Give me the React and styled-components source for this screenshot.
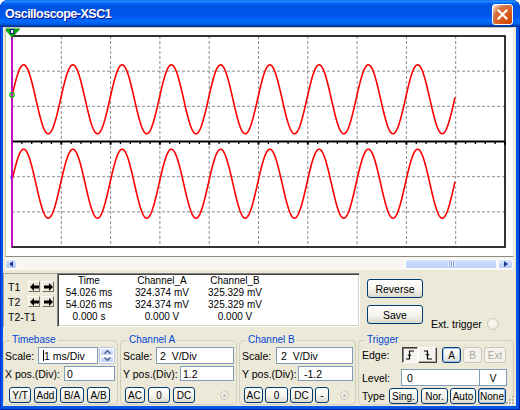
import React from "react";
import styled, { createGlobalStyle, css } from "styled-components";

const FONT = `"Liberation Sans", Arial, sans-serif`;

const GlobalStyle = createGlobalStyle`
  html, body { margin: 0; padding: 0; background: #ffffff; }
  body { font-family: ${FONT}; font-size: 10px; color: #000; }
  * { box-sizing: border-box; }
`;

const Window = styled.div`
  width: 520px;
  height: 410px;
  display: flex;
  flex-direction: column;
  background: #0055e8;
  border-radius: 8px 8px 0 0;
  box-shadow: inset 1px 0 0 #0831d9, inset -1px 0 0 #001ea0, inset 0 -1px 0 #001ea0;
  overflow: hidden;
`;

const TitleBar = styled.div`
  height: 27px;
  flex: none;
  display: flex;
  align-items: center;
  justify-content: space-between;
  padding: 0 7px 0 5px;
  border-radius: 8px 8px 0 0;
  background: linear-gradient(
    180deg,
    #0058ee 0%,
    #3593ff 4%,
    #288eff 6%,
    #127dff 8%,
    #036ffc 10%,
    #0262ee 14%,
    #0057e5 20%,
    #0054e3 24%,
    #0055eb 56%,
    #005bf5 66%,
    #026afe 76%,
    #0062ef 86%,
    #0052d6 92%,
    #0040ab 94%,
    #003092 100%
  );
`;

const TitleText = styled.span`
  color: #fff;
  font: bold 12.5px ${FONT};
  letter-spacing: -0.5px;
  text-shadow: 1px 1px 0 #0f1089;
  padding-top: 1px;
`;

const CloseButton = styled.div`
  width: 21px;
  height: 21px;
  margin-top: 1px;
  border: 1px solid #fff;
  border-radius: 3px;
  background: radial-gradient(
    circle at 90% 90%,
    #cc4600 0%,
    #dc6527 55%,
    #cd7546 70%,
    #ffccb2 90%,
    #ffffff 100%
  );
  display: flex;
  align-items: center;
  justify-content: center;
`;

const Body = styled.div`
  position: relative;
  flex: 1;
  margin: 0 4px 4px 3px;
  background: #ece9d8;
  display: flex;
  flex-direction: column;
`;

const ScopePanel = styled.div`
  flex: none;
  height: 230px;
  margin: 0 2px;
  background: #fff;
  border: 1px solid;
  border-color: #c9c6b8 #f1efe2 #8e8b7e #c9c6b8;
  display: flex;
`;

const HScroll = styled.div`
  flex: none;
  height: 13px;
  margin: 0 2px;
  padding: 0 1px 0 0;
  display: flex;
  align-items: center;
  background: #f7f6f1;
`;

const ScrollBtn = styled.div`
  width: ${(p) => p.$w}px;
  height: 10px;
  border: 1px solid #fff;
  border-radius: 2px;
  background: linear-gradient(#dbe6fe, #b7cbf7);
  display: flex;
  align-items: center;
  justify-content: center;
`;

const Thumb = styled.div`
  margin-left: auto;
  margin-right: 1px;
  width: 92px;
  height: 10px;
  border: 1px solid #fff;
  border-radius: 2px;
  background: linear-gradient(#d3e0fd, #bccff8);
  display: flex;
  align-items: center;
  justify-content: center;
`;

const Grip = styled.span`
  width: 7px;
  height: 6px;
  background: repeating-linear-gradient(90deg, #eef3ff 0 1px, #8da6dc 1px 2px);
`;

const CursorRow = styled.div`
  flex: none;
  height: 60px;
  padding-top: 3px;
  display: flex;
  align-items: flex-start;
`;

const TGroup = styled.div`
  width: 54px;
  height: 54px;
  border-top: 1px solid #aca899;
  border-left: 1px solid #aca899;
  padding: 7px 0 0 4px;
  display: grid;
  grid-template-columns: 18px 12px 12px;
  grid-template-rows: 11px 11px 12px;
  column-gap: 2px;
  row-gap: 4px;
  align-items: center;
`;

const TLabel = styled.span`
  font-size: 10.5px;
  line-height: 12px;
  ${(p) => p.$span && css`grid-column: 1 / -1;`}
`;

const ArrowBtn = styled.span`
  width: 12px;
  height: 11px;
  background: #ece9d8;
  border: 1px solid;
  border-color: #fff #716f64 #716f64 #fff;
  display: flex;
  align-items: center;
  justify-content: center;
`;

const DataBox = styled.div`
  width: 303px;
  height: 54px;
  background: #fff;
  border: 1px solid;
  border-color: #808080 #fff #fff #808080;
  box-shadow: inset 1px 1px 0 #404040, inset -1px -1px 0 #d4d0c8;
  padding-top: 1px;
  display: grid;
  grid-template-columns: 62px 84px 62px;
  grid-auto-rows: 12px;
  justify-items: center;
  line-height: 12px;
  font-size: 10px;
`;

const Cell = styled.span`
  white-space: nowrap;
`;

const ButtonCol = styled.div`
  margin-left: 7px;
  padding-top: 6px;
  display: flex;
  flex-direction: column;
  gap: 7px;
`;

const ExtTrigger = styled.div`
  align-self: flex-end;
  margin-left: 8px;
  display: flex;
  align-items: center;
  gap: 5px;
  font-size: 10.5px;
`;

const Radio = styled.span`
  width: ${(p) => p.$size}px;
  height: ${(p) => p.$size}px;
  border-radius: 50%;
  border: 1px solid #cac8bb;
  background: radial-gradient(circle at 40% 40%, #fbfaf6, #e6e3d6);
  display: flex;
  align-items: center;
  justify-content: center;
  flex: none;
  &::after {
    content: "";
    display: ${(p) => (p.$dot ? "block" : "none")};
    width: 3px;
    height: 3px;
    border-radius: 50%;
    background: #b8b5a6;
  }
`;

const ControlsRow = styled.div`
  flex: 1;
  display: grid;
  grid-template-columns: 115px 117px 117px 156px;
  column-gap: 2px;
  padding-bottom: 1px;
`;

const Group = styled.fieldset`
  margin: 4px 0 0 0;
  padding: 0 2px 0 1px;
  min-width: 0;
  border: 1px solid #d0d0bf;
  border-radius: 4px;
  display: flex;
  flex-direction: column;
`;

const Legend = styled.legend`
  margin-left: 5px;
  padding: 0 2px;
  color: #0046d5;
  font-size: 10px;
  line-height: 12px;
`;

const Row = styled.div`
  display: flex;
  align-items: center;
  height: ${(p) => p.$h}px;
  margin-top: ${(p) => p.$mt}px;
  padding-left: ${(p) => p.$pl || 0}px;
  gap: ${(p) => p.$gap || 0}px;
`;

const Tail = styled.div`
  display: flex;
  align-items: center;
  gap: ${(p) => p.$gap || 0}px;
  margin-left: ${(p) => (p.$auto ? "auto" : `${p.$ml || 0}px`)};
  margin-right: ${(p) => p.$mr || 0}px;
`;

const Label = styled.span`
  font-size: 10.5px;
  white-space: nowrap;
  ${(p) =>
    p.$w &&
    css`
      width: ${p.$w}px;
      flex: none;
    `}
`;

const Field = styled.div`
  width: ${(p) => p.$w}px;
  height: ${(p) => p.$h}px;
  margin-left: ${(p) => (p.$push ? "auto" : "0")};
  flex: none;
  background: #fff;
  border: 1px solid #7f9db9;
  ${(p) => p.$noLeft && css`border-left: none;`}
  padding-left: ${(p) => p.$pl ?? 3}px;
  display: flex;
  align-items: center;
  justify-content: ${(p) => (p.$center ? "center" : "flex-start")};
  font-size: 10.5px;
  white-space: pre;
`;

const Caret = styled.span`
  width: 1px;
  height: 11px;
  background: #000;
`;

const Spin = styled.div`
  width: 16px;
  height: 17px;
  margin-left: 1px;
  flex: none;
  display: flex;
  flex-direction: column;
  border: 1px solid #b5c6ea;
  border-radius: 2px;
  overflow: hidden;
`;

const SpinHalf = styled.div`
  flex: 1;
  background: linear-gradient(#dfe8fd, #bccef7);
  border: 1px solid #fff;
  display: flex;
  align-items: center;
  justify-content: center;
`;

const Btn = styled.button`
  width: ${(p) => p.$w}px;
  height: ${(p) => p.$h || 16}px;
  flex: none;
  padding: 0;
  margin: 0 0 0 ${(p) => p.$ml || 0}px;
  font: 10px ${FONT};
  color: #000;
  border: 1px solid #003c74;
  border-radius: 3px;
  background: linear-gradient(#ffffff 0%, #f4f3ee 55%, #dcd8ca 100%);
  display: inline-flex;
  align-items: center;
  justify-content: center;
  ${(p) =>
    p.$active &&
    css`
      box-shadow: inset 0 0 0 1px #a6c0ee;
    `}
  &:disabled {
    border-color: #c9c7ba;
    color: #aca899;
    background: #f4f3ee;
  }
`;

const BigBtn = styled(Btn)`
  font-size: 10.5px;
`;

const EdgeBtn = styled.span`
  width: ${(p) => p.$w}px;
  height: 16px;
  flex: none;
  display: flex;
  align-items: center;
  justify-content: center;
  border: 1px solid;
  ${(p) =>
    p.$pressed
      ? css`
          border-color: #404040 #fff #fff #404040;
          box-shadow: inset 1px 1px 0 #808080;
          background: #f6f5f0;
        `
      : css`
          border-color: #fff #404040 #404040 #fff;
          box-shadow: inset -1px -1px 0 #aca899;
          background: #f4f3ee;
        `}
`;

const SizeGrip = styled.svg`
  position: absolute;
  right: 1px;
  bottom: 1px;
`;

function LeftArrow() {
  return (
    <svg width="9" height="8" viewBox="0 0 9 8">
      <path d="M0 4 L4 0 V2.5 H9 V5.5 H4 V8 Z" fill="#000" />
    </svg>
  );
}
function RightArrow() {
  return (
    <svg width="9" height="8" viewBox="0 0 9 8">
      <path d="M9 4 L5 0 V2.5 H0 V5.5 H5 V8 Z" fill="#000" />
    </svg>
  );
}

function Chevron({ up }) {
  return (
    <svg width="7" height="4" viewBox="0 0 7 4">
      <polyline
        points={up ? "0.5,3.5 3.5,0.8 6.5,3.5" : "0.5,0.5 3.5,3.2 6.5,0.5"}
        fill="none"
        stroke="#4d6185"
        strokeWidth="1.4"
      />
    </svg>
  );
}

function EdgeIcon({ rising }) {
  return (
    <svg width="10" height="10" viewBox="0 0 10 10">
      <path
        d={rising ? "M1 9 H4.5 V1 H9" : "M1 1 H4.5 V9 H9"}
        fill="none"
        stroke="#000"
        strokeWidth="1.2"
      />
      <path
        d={rising ? "M2.8 6 L4.5 4.2 L6.2 6" : "M2.8 4 L4.5 5.8 L6.2 4"}
        fill="none"
        stroke="#000"
        strokeWidth="1"
      />
    </svg>
  );
}

function Screen() {
  const X0 = 12;
  const X1 = 505;
  const Y0 = 36;
  const Y1 = 247;
  const dx = (X1 - X0) / 10;
  const dy = (Y1 - Y0) / 6;
  const axis = Y0 + 3 * dy;
  const vlines = [1, 2, 3, 4, 5, 6, 7, 8, 9].map((i) => X0 + i * dx);
  const hlines = [1, 2, 4, 5].map((i) => Y0 + i * dy);
  const ticks = [];
  for (let i = 0; i <= 50; i++) ticks.push(X0 + (i * dx) / 5);
  const wave = (c) => {
    let d = "";
    for (let x = 12.5; x <= 455; x += 0.5) {
      const y = c - 34.5 * Math.sin((2 * Math.PI * (x - 11.3)) / 49.25);
      d += (d ? "L" : "M") + x.toFixed(1) + " " + y.toFixed(2);
    }
    return d;
  };
  const cA = axis - 1.2 * dy;
  const cB = axis + 1.2 * dy;
  return (
    <svg width="507" height="228" viewBox="6 28 507 228">
      {vlines.map((x) => (
        <line key={"v" + x} x1={x} y1={Y0} x2={x} y2={Y1} stroke="#8c8c8c" strokeWidth="1" strokeDasharray="3 2" />
      ))}
      {hlines.map((y) => (
        <line key={"h" + y} x1={X0} y1={y} x2={X1} y2={y} stroke="#8c8c8c" strokeWidth="1" strokeDasharray="3 2" />
      ))}
      <rect x={X0} y={Y0} width={X1 - X0} height={Y1 - Y0} fill="none" stroke="#000" strokeWidth="1.6" />
      <line x1={X0} y1={axis} x2={X1} y2={axis} stroke="#000" strokeWidth="1.8" />
      {ticks.map((x, i) => (
        <line
          key={"t" + i}
          x1={x}
          y1={axis}
          x2={x}
          y2={axis + (i % 5 === 0 ? 3.2 : 2.6)}
          stroke="#000"
          strokeWidth={i % 5 === 0 ? 2 : 1.3}
        />
      ))}
      <path d={wave(cA)} fill="none" stroke="#ff0000" strokeWidth="1.6" strokeLinejoin="round" />
      <path d={wave(cB)} fill="none" stroke="#ff0000" strokeWidth="1.6" strokeLinejoin="round" />
      <line x1="12" y1="30" x2="12" y2={Y1} stroke="#ff00ff" strokeWidth="1.4" />
      <circle cx="12" cy={cA - 4.5} r="2.3" fill="none" stroke="#00c000" strokeWidth="1.2" />
      <line x1="11.2" y1={cB - 8} x2="11.2" y2={cB - 5} stroke="#0000ff" strokeWidth="1" />
      <polygon points="4.5,28.8 20,28.8 12.2,37.5" fill="#00b000" stroke="#007000" strokeWidth="0.5" />
      <rect x="10.6" y="29.4" width="3.2" height="4" fill="#fff" stroke="#000080" strokeWidth="0.9" />
    </svg>
  );
}

export default function App() {
  return (
    <>
      <GlobalStyle />
      <Window>
        <TitleBar>
          <TitleText>Oscilloscope-XSC1</TitleText>
          <CloseButton>
            <svg width="11" height="11" viewBox="0 0 11 11">
              <path d="M1.5 1.5 L9.5 9.5 M9.5 1.5 L1.5 9.5" stroke="#fff" strokeWidth="2.2" strokeLinecap="square" />
            </svg>
          </CloseButton>
        </TitleBar>
        <Body>
          <ScopePanel>
            <Screen />
          </ScopePanel>
          <HScroll>
            <ScrollBtn $w={12}>
              <svg width="4" height="6" viewBox="0 0 4 6">
                <path d="M4 0 L0 3 L4 6 Z" fill="#1c3c8c" />
              </svg>
            </ScrollBtn>
            <Thumb>
              <Grip />
            </Thumb>
            <ScrollBtn $w={15}>
              <svg width="4" height="6" viewBox="0 0 4 6">
                <path d="M0 0 L4 3 L0 6 Z" fill="#1c3c8c" />
              </svg>
            </ScrollBtn>
          </HScroll>
          <CursorRow>
            <TGroup>
              <TLabel>T1</TLabel>
              <ArrowBtn><LeftArrow /></ArrowBtn>
              <ArrowBtn><RightArrow /></ArrowBtn>
              <TLabel>T2</TLabel>
              <ArrowBtn><LeftArrow /></ArrowBtn>
              <ArrowBtn><RightArrow /></ArrowBtn>
              <TLabel $span>T2-T1</TLabel>
            </TGroup>
            <DataBox>
              <Cell>Time</Cell>
              <Cell>Channel_A</Cell>
              <Cell>Channel_B</Cell>
              <Cell>54.026 ms</Cell>
              <Cell>324.374 mV</Cell>
              <Cell>325.329 mV</Cell>
              <Cell>54.026 ms</Cell>
              <Cell>324.374 mV</Cell>
              <Cell>325.329 mV</Cell>
              <Cell>0.000 s</Cell>
              <Cell>0.000 V</Cell>
              <Cell>0.000 V</Cell>
            </DataBox>
            <ButtonCol>
              <BigBtn $w={56} $h={19}>Reverse</BigBtn>
              <BigBtn $w={56} $h={19}>Save</BigBtn>
            </ButtonCol>
            <ExtTrigger>
              <span>Ext. trigger</span>
              <Radio $size={12} />
            </ExtTrigger>
          </CursorRow>
          <ControlsRow>
            <Group>
              <Legend>Timebase</Legend>
              <Row $h={17} $mt={1}>
                <Label>Scale:</Label>
                <Field $w={60} $h={17} $push $pl={4}>
                  <Caret />1 ms/Div
                </Field>
                <Spin>
                  <SpinHalf><Chevron up /></SpinHalf>
                  <SpinHalf><Chevron /></SpinHalf>
                </Spin>
              </Row>
              <Row $h={15} $mt={2}>
                <Label>X pos.(Div):</Label>
                <Field $w={51} $h={15} $push $pl={2}>0</Field>
              </Row>
              <Row $h={16} $mt={6} $pl={4} $gap={3}>
                <Btn $w={22}>Y/T</Btn>
                <Btn $w={23}>Add</Btn>
                <Btn $w={24}>B/A</Btn>
                <Btn $w={23}>A/B</Btn>
              </Row>
            </Group>
            <Group>
              <Legend>Channel A</Legend>
              <Row $h={17} $mt={1} $pl={1}>
                <Label>Scale:</Label>
                <Field $w={78} $h={17} $push>{"2  V/Div"}</Field>
              </Row>
              <Row $h={15} $mt={2} $pl={1}>
                <Label>Y pos.(Div):</Label>
                <Field $w={54} $h={15} $push $pl={2}>1.2</Field>
              </Row>
              <Row $h={16} $mt={6} $pl={3} $gap={3}>
                <Btn $w={20}>AC</Btn>
                <Btn $w={22}>0</Btn>
                <Btn $w={22}>DC</Btn>
                <Tail $auto $mr={5}>
                  <Radio $size={9} $dot />
                </Tail>
              </Row>
            </Group>
            <Group>
              <Legend>Channel B</Legend>
              <Row $h={17} $mt={1} $pl={1}>
                <Label>Scale:</Label>
                <Field $w={77} $h={17} $push $pl={4}>{"2  V/Div"}</Field>
              </Row>
              <Row $h={15} $mt={2} $pl={1}>
                <Label>Y pos.(Div):</Label>
                <Field $w={55} $h={15} $push $pl={5}>-1.2</Field>
              </Row>
              <Row $h={16} $mt={6} $pl={3} $gap={2}>
                <Btn $w={19}>AC</Btn>
                <Btn $w={23}>0</Btn>
                <Btn $w={23}>DC</Btn>
                <Btn $w={14}>-</Btn>
                <Tail $auto $mr={4}>
                  <Radio $size={9} $dot />
                </Tail>
              </Row>
            </Group>
            <Group>
              <Legend>Trigger</Legend>
              <Row $h={16} $mt={1} $pl={2}>
                <Label $w={40}>Edge:</Label>
                <EdgeBtn $w={16} $pressed><EdgeIcon rising /></EdgeBtn>
                <EdgeBtn $w={19}><EdgeIcon /></EdgeBtn>
                <Tail $ml={5} $gap={2}>
                  <Btn $w={19} $active>A</Btn>
                  <Btn $w={19} disabled>B</Btn>
                  <Btn $w={22} disabled>Ext</Btn>
                </Tail>
              </Row>
              <Row $h={17} $mt={6} $pl={2}>
                <Label $w={39}>Level:</Label>
                <Field $w={79} $h={17} $pl={5}>0</Field>
                <Field $w={27} $h={17} $noLeft $pl={0} $center>V</Field>
              </Row>
              <Row $h={16} $mt={2} $pl={2}>
                <Label $w={27}>Type</Label>
                <Btn $w={29}>Sing.</Btn>
                <Btn $w={27} $ml={3}>Nor.</Btn>
                <Btn $w={26} $ml={2}>Auto</Btn>
                <Btn $w={28} $ml={2} $active>None</Btn>
              </Row>
            </Group>
          </ControlsRow>
          <SizeGrip width="10" height="10" viewBox="0 0 10 10">
            {[
              [7, 1], [7, 4], [4, 4], [7, 7], [4, 7], [1, 7],
            ].map(([x, y]) => (
              <g key={x + "-" + y}>
                <rect x={x + 1} y={y + 1} width="2" height="2" fill="#fff" />
                <rect x={x} y={y} width="2" height="2" fill="#b8b5a6" />
              </g>
            ))}
          </SizeGrip>
        </Body>
      </Window>
    </>
  );
}
